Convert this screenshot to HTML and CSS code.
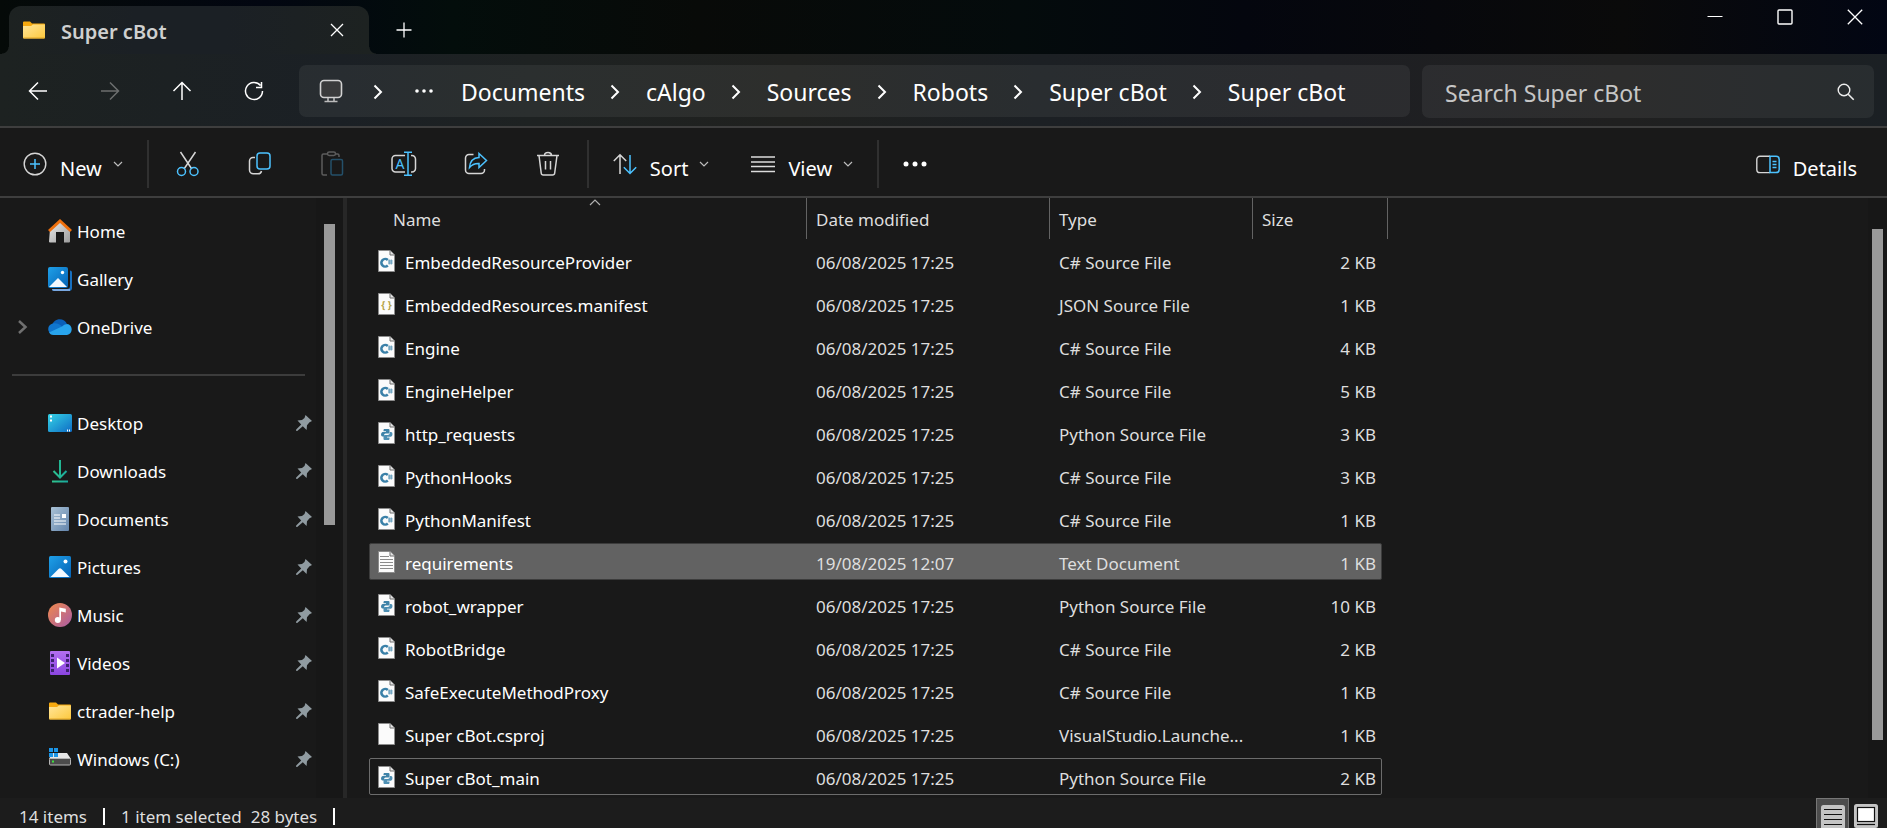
FILE: index.html
```html
<!DOCTYPE html>
<html lang="en">
<head>
	<meta charset="UTF-8">
	<meta name="viewport" content="width=device-width, initial-scale=1.0">
	<title>Super cBot</title>
	<link rel="stylesheet" href="styles.css">
</head>
<body>
	<!-- shared icons -->
	<svg class="defs" width="0" height="0" aria-hidden="true">
		<defs>
			<linearGradient id="g-folder" x1="0" y1="0" x2="1" y2="1"><stop offset="0" stop-color="#ffe59a"/><stop offset="1" stop-color="#fcc83c"/></linearGradient>
			<linearGradient id="g-blue" x1="0" y1="0" x2="1" y2="1"><stop offset="0" stop-color="#1fa0e8"/><stop offset="1" stop-color="#0562b5"/></linearGradient>
			<linearGradient id="g-desk" x1="0" y1="0" x2="1" y2="1"><stop offset="0" stop-color="#35d3e6"/><stop offset="1" stop-color="#0f6cc4"/></linearGradient>
			<linearGradient id="g-doc" x1="0" y1="0" x2="1" y2="1"><stop offset="0" stop-color="#a9c2d6"/><stop offset="1" stop-color="#6485ac"/></linearGradient>
			<linearGradient id="g-music" x1="0" y1="0" x2="1" y2="1"><stop offset="0" stop-color="#f08a4b"/><stop offset="1" stop-color="#a85ba6"/></linearGradient>
			<linearGradient id="g-video" x1="0" y1="0" x2="0" y2="1"><stop offset="0" stop-color="#b36ff0"/><stop offset="1" stop-color="#8a45e0"/></linearGradient>
			<linearGradient id="g-down" x1="0" y1="0" x2="1" y2="0"><stop offset="0" stop-color="#2fc48d"/><stop offset="1" stop-color="#18a89e"/></linearGradient>
			<linearGradient id="g-home" x1="0" y1="0" x2="1" y2="1"><stop offset="0" stop-color="#ececec"/><stop offset="1" stop-color="#9c9c9c"/></linearGradient>
		</defs>
		<symbol id="folder" viewBox="0 0 24 24">
			<path d="M1 4.500a1 1 0 0 1 1-1h6l2 2h12a1 1 0 0 1 1 1v6H1z" fill="#f6a90f"/>
			<path d="M1 8h8l2-1.500h12v13a1 1 0 0 1-1 1H2a1 1 0 0 1-1-1z" fill="url(#g-folder)"/>
			<path d="M1.500 20h21" stroke="#e0a526"/>
		</symbol>
		<symbol id="pin" viewBox="0 0 16 16">
			<path d="M9.500 0L16 6l-2.500 1.200-2.500 3-.4 4.800L6.800 11.200 1.200 16 0 15.800l.2-1.300 5-5L1.500 5.500l4.500-.5 2.500-2z" fill="#909ba1"/>
		</symbol>
		<symbol id="down" viewBox="0 0 10 6"><path d="M1 1l4 4 4-4" fill="none" stroke="#bdbdbd" stroke-width="1.200"/></symbol>
		<symbol id="next" viewBox="0 0 10 16"><path d="M1.500 1.500L8 8l-6.500 6.500" fill="none" stroke="#fff" stroke-width="2"/></symbol>
		<symbol id="page" viewBox="0 0 17 22">
			<path d="M.5.5H12l4.500 4.500v16.500H.5z" fill="#fbfbfb" stroke="#8c8c8c"/>
			<path d="M12 .5V5h4.500" fill="#e4e4e4" stroke="#6e6e6e"/>
		</symbol>
		<symbol id="cs" viewBox="0 0 17 22">
			<use href="#page"/>
			<path d="M9.800 10A3.800 3.800 0 1 0 9.800 15.500" fill="none" stroke="#3a80a8" stroke-width="2.600"/>
			<path d="M11.200 9.500v5M13.200 9.500v5M10.200 11h4.500M10.200 13h4.500" stroke="#5a97b8" stroke-width="1"/>
		</symbol>
		<symbol id="py" viewBox="0 0 17 22">
			<use href="#page"/>
			<path d="M6 7h4.500q1 0 1 1v2.500q0 1-1 1h-3q-1.500 0-1.500 2v1H4.500Q3 14.500 3 12.500T4.500 10H8V9.200H5.500V8z" fill="#3f83a8"/>
			<path d="M11 18H6.500q-1 0-1-1v-2.500q0-1.500 1.200-1.500h3q2 0 2-2v-1H13q1.500 0 1.500 2T13 14.800H9v.7h2.500V17z" fill="#4d8fb3"/>
		</symbol>
		<symbol id="txt" viewBox="0 0 17 22">
			<use href="#page"/>
			<path d="M2 5.500h9M2 8.500h13M2 11.500h13M2 14.500h13M2 17.500h13" stroke="#8a8a8a" stroke-width="1.200"/>
		</symbol>
	</svg>

	<header class="titlebar">
		<div class="tab">
			<svg class="icon24"><use href="#folder"/></svg>
			<span class="tab-title">Super cBot</span>
			<button type="button" class="plain tab-close" aria-label="Close tab"><svg width="14" height="14" viewBox="0 0 14 14"><path d="M1 1l12 12M13 1L1 13" stroke="#fff" stroke-width="1.300"/></svg></button>
		</div>
		<button type="button" class="plain tab-new" aria-label="New tab"><svg width="16" height="16" viewBox="0 0 16 16"><path d="M8 .5v15M.5 8h15" stroke="#fff" stroke-width="1.300"/></svg></button>
		<div class="window-buttons">
			<button type="button" class="plain" aria-label="Minimize"><svg width="16" height="16" viewBox="0 0 16 16"><path d="M.5 7.500h15" stroke="#fff"/></svg></button>
			<button type="button" class="plain" aria-label="Maximize"><svg width="16" height="16" viewBox="0 0 16 16"><rect x="1" y="1" width="14" height="14" rx="1" fill="none" stroke="#fff" stroke-width="1.400"/></svg></button>
			<button type="button" class="plain" aria-label="Close"><svg width="16" height="16" viewBox="0 0 16 16"><path d="M.8.8l14.400 14.400M15.200.8L.8 15.200" stroke="#fff" stroke-width="1.300"/></svg></button>
		</div>
	</header>

	<nav class="navbar">
		<div class="nav-buttons">
			<button type="button" class="plain" aria-label="Back"><svg width="20" height="20" viewBox="0 0 20 20"><path d="M19 10H1.500M10 1.500L1.500 10l8.500 8.500"/></svg></button>
			<button type="button" class="plain" aria-label="Forward" disabled><svg width="20" height="20" viewBox="0 0 20 20"><path d="M1 10h17.500M10 1.500l8.500 8.500-8.500 8.500"/></svg></button>
			<button type="button" class="plain" aria-label="Up"><svg width="20" height="20" viewBox="0 0 20 20"><path d="M10 19V1.500M1.500 10L10 1.500l8.500 8.500"/></svg></button>
			<button type="button" class="plain" aria-label="Refresh"><svg width="20" height="20" viewBox="0 0 20 20"><path d="M16.500 4.500A8.500 8.500 0 1 0 18.500 10M17.500 1v5.500H12"/></svg></button>
		</div>
		<div class="address">
			<svg width="24" height="24" viewBox="0 0 24 24"><rect x="1.500" y="1.500" width="21" height="17" rx="3.500" fill="#3a3b3c" stroke="#d2d2d2" stroke-width="1.600"/><path d="M9 19v3M15 19v3M5.500 22.500h13" stroke="#bbb" stroke-width="1.600"/></svg>
			<svg class="next next-root"><use href="#next"/></svg>
			<button type="button" class="plain dots" aria-label="More folders"><svg width="18" height="4" viewBox="0 0 18 4"><circle cx="2" cy="2" r="1.800"/><circle cx="9" cy="2" r="1.800"/><circle cx="16" cy="2" r="1.800"/></svg></button>
			<a href="#">Documents</a>
			<svg class="next"><use href="#next"/></svg>
			<a href="#">cAlgo</a>
			<svg class="next"><use href="#next"/></svg>
			<a href="#">Sources</a>
			<svg class="next"><use href="#next"/></svg>
			<a href="#">Robots</a>
			<svg class="next"><use href="#next"/></svg>
			<a href="#">Super cBot</a>
			<svg class="next"><use href="#next"/></svg>
			<a href="#">Super cBot</a>
		</div>
		<div class="search">
			<input type="text" placeholder="Search Super cBot" aria-label="Search Super cBot">
			<svg width="18" height="18" viewBox="0 0 18 18"><circle cx="7" cy="7" r="5.800" fill="none" stroke="#eee" stroke-width="1.400"/><path d="M11.200 11.200l5.500 5.500" stroke="#eee" stroke-width="1.600"/></svg>
		</div>
	</nav>

	<div class="toolbar">
		<button type="button" class="plain tool-text">
			<svg width="24" height="24" viewBox="0 0 24 24"><circle cx="12" cy="12" r="10.800" fill="none" stroke="#d6d6d6" stroke-width="1.400"/><path d="M12 7v10M7 12h10" stroke="#4cc2ff" stroke-width="1.500"/></svg>
			<span>New</span>
			<svg class="down"><use href="#down"/></svg>
		</button>
		<i class="sep"></i>
		<div class="tool-icons">
			<button type="button" class="plain" aria-label="Cut"><svg width="24" height="26" viewBox="0 0 24 26"><path d="M4.500 1l11.300 17M19.500 1L8 18" stroke="#d6d6d6"/><circle cx="5.500" cy="20.500" r="4" stroke="#4cc2ff"/><circle cx="18" cy="20.500" r="4" stroke="#4cc2ff"/></svg></button>
			<button type="button" class="plain" aria-label="Copy"><svg width="24" height="26" viewBox="0 0 24 26"><path d="M7 6.500H5a3.500 3.500 0 0 0-3.500 3.500v9A3.800 3.800 0 0 0 5.300 22.800H10a3.500 3.500 0 0 0 3.500-2.800" stroke="#d6d6d6"/><rect x="9" y="2" width="13" height="16" rx="3" stroke="#4cc2ff"/></svg></button>
			<button type="button" class="plain" aria-label="Paste" disabled><svg width="24" height="26" viewBox="0 0 24 26"><path d="M8 3H3.500A1.500 1.500 0 0 0 2 4.500v18A1.500 1.500 0 0 0 3.500 24H7M15 3h2.500Q19 3 19 4.500V6" stroke="#5c5c5c"/><rect x="7.500" y="1" width="8" height="3.500" rx="1.700" stroke="#5c5c5c"/><rect x="11" y="8.500" width="11.500" height="15.500" rx="1.500" stroke="#24506a"/></svg></button>
			<button type="button" class="plain" aria-label="Rename"><svg width="26" height="26" viewBox="0 0 26 26"><path d="M14 4.500H4.500A3.500 3.500 0 0 0 1 8v9.500A3.500 3.500 0 0 0 4.500 21H14M20 4.500h1A3.500 3.500 0 0 1 24.500 8v9.500A3.500 3.500 0 0 1 21 21h-1" stroke="#d6d6d6"/><path d="M17 1.500v22.500M13 1.300h8M13 24.300h8" stroke="#4cc2ff"/><text x="9" y="17.500" text-anchor="middle" font-size="14" fill="#4cc2ff">A</text></svg></button>
			<button type="button" class="plain" aria-label="Share"><svg width="24" height="26" viewBox="0 0 24 26"><path d="M9.500 3.500H5A3.500 3.500 0 0 0 1.500 7v12A3.500 3.500 0 0 0 5 22.500h12A3.500 3.500 0 0 0 20.500 19v-1" stroke="#d6d6d6"/><path d="M15 2.500l7.500 7-7.500 7v-4C10.500 12.300 8 13.500 5.500 16.500 6 10 9.500 6.800 15 6.500z" stroke="#4cc2ff"/></svg></button>
			<button type="button" class="plain" aria-label="Delete"><svg width="24" height="26" viewBox="0 0 24 26"><path d="M1 4.500h22M3 4.500l2.200 17.500A2.200 2.200 0 0 0 7.500 24h9a2.200 2.200 0 0 0 2.200-2L21 4.500M8.500 4.500a3.500 3 0 0 1 7 0M9.500 10v8.500M14.500 10v8.500" stroke="#d6d6d6"/></svg></button>
		</div>
		<i class="sep"></i>
		<button type="button" class="plain tool-text">
			<svg width="24" height="24" viewBox="0 0 24 24"><path d="M7 22V3M.8 9L7 2.800 13.200 9" fill="none" stroke="#d6d6d6" stroke-width="1.500"/><path d="M17 3v18.500M10.800 15.300l6.200 6.200 6.200-6.200" fill="none" stroke="#4cc2ff" stroke-width="1.500"/></svg>
			<span>Sort</span>
			<svg class="down"><use href="#down"/></svg>
		</button>
		<button type="button" class="plain tool-text tool-view">
			<svg width="24" height="24" viewBox="0 0 24 24"><path d="M0 5h24M0 10h24M0 14.500h24M0 19.500h24" stroke="#dcdcdc" stroke-width="1.500"/></svg>
			<span>View</span>
			<svg class="down"><use href="#down"/></svg>
		</button>
		<i class="sep"></i>
		<button type="button" class="plain tool-text" aria-label="See more"><svg width="24" height="6" viewBox="0 0 24 6"><circle cx="3" cy="3" r="2.500" fill="#fff"/><circle cx="12" cy="3" r="2.500" fill="#fff"/><circle cx="21" cy="3" r="2.500" fill="#fff"/></svg></button>
		<button type="button" class="plain tool-text tool-details">
			<svg width="24" height="24" viewBox="0 0 24 24"><path d="M14 4.200H4A3.200 3.200 0 0 0 .8 7.400v10A3.200 3.200 0 0 0 4 20.600h10" fill="none" stroke="#d6d6d6" stroke-width="1.400"/><path d="M14 4.200h6a3.200 3.200 0 0 1 3.200 3.200v10a3.200 3.200 0 0 1-3.200 3.200h-6zM16.500 9.500h4M16.500 12.500h4M16.500 15.500h4" fill="none" stroke="#4cc2ff" stroke-width="1.500"/></svg>
			<span>Details</span>
		</button>
	</div>

	<main class="main">
		<aside class="sidebar">
			<ul class="places">
				<li><a href="#"><svg class="icon24" viewBox="0 0 24 24"><path d="M2 10l10-8 10 8v12.500a1 1 0 0 1-1 1h-5V13H8v10.500H2a1 1 0 0 1-1-1z" fill="url(#g-home)"/><path d="M1 12L12 2l11 10" fill="none" stroke="#ee6f0c" stroke-width="3"/></svg>Home</a></li>
				<li><a href="#"><svg class="icon24" viewBox="0 0 24 24"><path d="M22 3.500q2 0 2 2V21q0 3-3 3H6q-2 0-2-2h15q3 0 3-3z" fill="#1870c0"/><path d="M4 22h18v2H6q-2 0-2-2z" fill="#79a7e0"/><rect width="20" height="21" rx="2" fill="url(#g-blue)"/><path d="M1 20l9-9 9 9z" fill="#f2f8ff"/><circle cx="14.500" cy="5.500" r="1.700" fill="#fff"/></svg>Gallery</a></li>
				<li><svg class="expand" width="10" height="14" viewBox="0 0 10 14"><path d="M1 1l6.500 6L1 13" fill="none" stroke="#707070" stroke-width="2.500"/></svg><a href="#"><svg class="icon24" viewBox="0 0 24 24"><path d="M4 11C5 2.500 16.500 2 19 9l-6 6z" fill="#0a5fb8"/><path d="M5 8.500c3-.5 6 0 9 3L6 19.500C-1.500 19-1.500 9.500 5 8.500z" fill="#1076cf"/><path d="M19 9c6 .5 6.500 10 0 11H5.500q-3 0-4.500-2.500L14 11.500Q16 9 19 9z" fill="#28a4ec"/></svg>OneDrive</a></li>
				<li class="rule"></li>
				<li><a href="#"><svg class="icon24" viewBox="0 0 24 24"><rect y="3" width="24" height="18" rx="1.500" fill="url(#g-desk)"/><path d="M2 5.500h2M2 9.500h2M19 19.500h1M21 19.500h1" stroke="#fff" stroke-width="2"/></svg>Desktop</a><svg class="pin"><use href="#pin"/></svg></li>
				<li><a href="#"><svg class="icon24" viewBox="0 0 24 24"><path d="M11 1h2v18h-2z" fill="#22b592"/><path d="M5.500 12l6.500 6.500 6.500-6.500M4 22.500h16" fill="none" stroke="url(#g-down)" stroke-width="2"/></svg>Downloads</a><svg class="pin"><use href="#pin"/></svg></li>
				<li><a href="#"><svg class="icon24" viewBox="0 0 24 24"><rect x="3" width="18" height="24" rx="1" fill="url(#g-doc)"/><path d="M6 8h6M6 11h6M6 14h12M6 17h12" stroke="#fff"/><path d="M14 7h4v4h-4z" fill="#fff"/></svg>Documents</a><svg class="pin"><use href="#pin"/></svg></li>
				<li><a href="#"><svg class="icon24" viewBox="0 0 24 24"><rect x="1" y="1" width="22" height="22" rx="1.500" fill="url(#g-blue)"/><path d="M2.500 22l8-8q1.500-1.500 3 0l8 8z" fill="#f4f9ff"/><circle cx="17.500" cy="6.500" r="2" fill="#fff"/></svg>Pictures</a><svg class="pin"><use href="#pin"/></svg></li>
				<li><a href="#"><svg class="icon24" viewBox="0 0 24 24"><circle cx="12" cy="12" r="12" fill="url(#g-music)"/><circle cx="9.800" cy="17" r="3" fill="#fff"/><path d="M11.300 17V4.500l6.500 1.200V9.500L13 8.600V17z" fill="#fff"/></svg>Music</a><svg class="pin"><use href="#pin"/></svg></li>
				<li><a href="#"><svg class="icon24" viewBox="0 0 24 24"><rect x="2" width="20" height="24" rx="1" fill="url(#g-video)"/><path d="M4.500 3v20M19.500 3v20" stroke="#3d2270" stroke-width="3" stroke-dasharray="3 2"/><path d="M9 6.500l8 5.500-8 5.500z" fill="#fff"/></svg>Videos</a><svg class="pin"><use href="#pin"/></svg></li>
				<li><a href="#"><svg class="icon24"><use href="#folder"/></svg>ctrader-help</a><svg class="pin"><use href="#pin"/></svg></li>
				<li><a href="#"><svg class="icon24" viewBox="0 0 24 24"><path d="M4 6h15l4 6H1z" fill="#e6e6e6"/><rect x="1.500" y="11.500" width="21" height="6.500" rx="1" fill="#4c4c4c" stroke="#b5b5b5"/><path d="M4 14.500h2" stroke="#3fe03f" stroke-width="2"/><path d="M1 1h4v4H1zM6 1h4v4H6zM1 6h4v4H1zM6 6h4v4H6z" fill="#1c95e6"/></svg>Windows (C:)</a><svg class="pin"><use href="#pin"/></svg></li>
			</ul>
			<div class="track track-side"><div class="thumb"></div></div>
		</aside>

		<section class="content">
			<table class="files">
				<thead>
					<tr>
						<th>Name<svg class="sorted" width="12" height="7" viewBox="0 0 12 7"><path d="M1 6l5-5 5 5" fill="none" stroke="#b0b0b0" stroke-width="1.200"/></svg></th>
						<th>Date modified</th>
						<th>Type</th>
						<th>Size</th>
					</tr>
				</thead>
				<tbody>
					<tr><td><svg class="file"><use href="#cs"/></svg>EmbeddedResourceProvider</td><td>06/08/2025 17:25</td><td>C# Source File</td><td>2 KB</td></tr>
					<tr><td><svg class="file" viewBox="0 0 17 22"><use href="#page"/><text x="8.500" y="15.500" text-anchor="middle" font-size="10" font-weight="bold" fill="#b5a345">{ }</text></svg>EmbeddedResources.manifest</td><td>06/08/2025 17:25</td><td>JSON Source File</td><td>1 KB</td></tr>
					<tr><td><svg class="file"><use href="#cs"/></svg>Engine</td><td>06/08/2025 17:25</td><td>C# Source File</td><td>4 KB</td></tr>
					<tr><td><svg class="file"><use href="#cs"/></svg>EngineHelper</td><td>06/08/2025 17:25</td><td>C# Source File</td><td>5 KB</td></tr>
					<tr><td><svg class="file"><use href="#py"/></svg>http_requests</td><td>06/08/2025 17:25</td><td>Python Source File</td><td>3 KB</td></tr>
					<tr><td><svg class="file"><use href="#cs"/></svg>PythonHooks</td><td>06/08/2025 17:25</td><td>C# Source File</td><td>3 KB</td></tr>
					<tr><td><svg class="file"><use href="#cs"/></svg>PythonManifest</td><td>06/08/2025 17:25</td><td>C# Source File</td><td>1 KB</td></tr>
					<tr class="selected"><td><svg class="file"><use href="#txt"/></svg>requirements</td><td>19/08/2025 12:07</td><td>Text Document</td><td>1 KB</td></tr>
					<tr><td><svg class="file"><use href="#py"/></svg>robot_wrapper</td><td>06/08/2025 17:25</td><td>Python Source File</td><td>10 KB</td></tr>
					<tr><td><svg class="file"><use href="#cs"/></svg>RobotBridge</td><td>06/08/2025 17:25</td><td>C# Source File</td><td>2 KB</td></tr>
					<tr><td><svg class="file"><use href="#cs"/></svg>SafeExecuteMethodProxy</td><td>06/08/2025 17:25</td><td>C# Source File</td><td>1 KB</td></tr>
					<tr><td><svg class="file"><use href="#page"/></svg>Super cBot.csproj</td><td>06/08/2025 17:25</td><td>VisualStudio.Launche...</td><td>1 KB</td></tr>
					<tr class="focused"><td><svg class="file"><use href="#py"/></svg>Super cBot_main</td><td>06/08/2025 17:25</td><td>Python Source File</td><td>2 KB</td></tr>
				</tbody>
			</table>
			<div class="track track-main"><div class="thumb"></div></div>
		</section>
	</main>

	<footer class="status">
		<span class="count">14 items</span>
		<span class="picked">1 item selected</span>
		<span class="count">28 bytes</span>
		<div class="view-switch">
			<button type="button" class="plain active" aria-label="Details view"><svg width="24" height="24" viewBox="0 0 24 24"><rect width="24" height="26" rx="2.500" fill="#c4c4c4"/><path d="M3 4.500h18M3 9.500h18M3 14.500h18M3 19.500h18" stroke="#111" stroke-width="1.200"/></svg></button>
			<button type="button" class="plain" aria-label="Large icons view"><svg width="24" height="24" viewBox="0 0 24 24"><rect width="24" height="24" rx="2.500" fill="#c4c4c4"/><rect x="3.500" y="3.500" width="17" height="14" fill="#fff" stroke="#111" stroke-width="1.200"/><path d="M3 20.500h18" stroke="#111" stroke-width="1.200"/></svg></button>
		</div>
	</footer>
</body>
</html>
```

FILE: styles.css
```css
* {
	box-sizing: border-box;
}
body {
	margin: 0;
	height: 100vh;
	display: flex;
	flex-direction: column;
	overflow: hidden;
	background: #191919;
	color: #fff;
	font-family: "Segoe UI", "Noto Sans", sans-serif;
	font-size: 17px;
}
.defs {
	position: absolute;
}
svg {
	display: block;
	flex: none;
}
a {
	color: inherit;
	text-decoration: none;
}
.plain {
	display: flex;
	align-items: center;
	justify-content: center;
	padding: 0;
	border: 0;
	background: none;
	color: inherit;
	font: inherit;
}
.icon24 {
	width: 24px;
	height: 24px;
}

/* title bar */
.titlebar {
	flex: none;
	display: flex;
	align-items: flex-start;
	height: 54px;
	padding-left: 9px;
	background: linear-gradient(90deg, #050a08 0%, #020611 14%, #030d0b 24%, #080a08 37%, #040b0c 54%, #04060e 66%, #0a0a0a 86%, #020613 100%);
}
.tab {
	position: relative;
	display: flex;
	align-items: center;
	width: 360px;
	height: 48px;
	margin-top: 6px;
	padding: 0 18px 0 13px;
	border-radius: 12px 12px 0 0;
	background: linear-gradient(90deg, #1d2221, #1b2025 35%, #1b2025 60%, #1d2221);
}
/* curved feet of the tab */
.tab::before,
.tab::after {
	content: '';
	position: absolute;
	bottom: 0;
	width: 7px; height: 7px;
}
.tab::before {
	left: -7px;
	background: radial-gradient(circle at 0 0, transparent 6px, #1d2221 7px);
}
.tab::after {
	right: -7px;
	background: radial-gradient(circle at 100% 0, transparent 6px, #1d2221 7px);
}
.tab-title {
	flex: 1;
	margin-left: 15px;
	padding-top: 3px;
	color: #cfd0d0;
	font-size: 20px;
	font-weight: 600;
}
.tab-close {
	width: 28px;
	height: 32px;
}
.tab-new {
	width: 48px;
	height: 48px;
	margin: 6px 0 0 11px;
}
.window-buttons {
	display: flex;
	gap: 6px;
	margin-left: auto;
}
.window-buttons button {
	width: 64px;
	height: 33px;
}

/* navigation bar */
.navbar {
	flex: none;
	display: flex;
	align-items: flex-start;
	height: 74px;
	padding: 11px 13px 0 2px;
	border-bottom: 2px solid #3e3e3e;
	background: linear-gradient(90deg, #1d2221 0%, #1b2025 18%, #1e2222 28%, #20211f 42%, #1c2024 55%, #1e1f23 70%, #202020 86%, #1b2024 100%);
}
.nav-buttons {
	display: flex;
	margin-right: 9px;
}
.nav-buttons button {
	width: 72px;
	height: 52px;
}
.nav-buttons path {
	fill: none;
	stroke: #fff;
	stroke-width: 1.5;
}
.nav-buttons button:disabled path {
	stroke: #6c6e6e;
}
.address {
	flex: 1;
	display: flex;
	align-items: center;
	height: 52px;
	padding-left: 20px;
	border-radius: 7px;
	background: rgba(255, 255, 255, .06);
	font-size: 23px;
}
.address a {
	padding-top: 2px;
}
.next {
	width: 10px;
	height: 16px;
	margin: 2px 26px 0 25px;
}
.next-root {
	margin: 2px 32px 0 30px;
}
.dots {
	margin-right: 28px;
}
.dots circle {
	fill: #fff;
}
.search {
	display: flex;
	align-items: center;
	width: 452px;
	height: 53px;
	margin-left: 12px;
	padding: 0 19px 0 23px;
	border-radius: 7px;
	background: rgba(255, 255, 255, .06);
}
.search input {
	flex: 1;
	min-width: 0;
	padding: 2px 0 0;
	border: 0;
	outline: 0;
	background: none;
	color: #fff;
	font: inherit;
	font-size: 23px;
}
.search input::placeholder {
	color: #c6c6c6;
}

/* command bar */
.toolbar {
	flex: none;
	display: flex;
	align-items: center;
	height: 70px;
	padding: 4px 30px 0 23px;
	border-bottom: 2px solid #3e3e3e;
}
.sep {
	width: 2px;
	height: 48px;
	background: #303030;
}
.tool-text {
	font-size: 20px;
}
.tool-text span {
	margin: 8px 11px 0 13px;
}
.toolbar .sep {
	margin: 0 24px;
}
.tool-icons {
	display: flex;
	margin: 0 -21px;
}
.tool-icons button {
	width: 72px;
	height: 48px;
}
.tool-icons svg {
	fill: none;
	stroke-width: 1.5;
}
.down {
	width: 10px;
	height: 6px;
}
.tool-view {
	margin-left: 42px;
}
.tool-details {
	margin-left: auto;
}
.tool-details span {
	margin-right: 0;
}

/* main area */
.main {
	flex: 1;
	display: flex;
	min-height: 0;
}
.sidebar {
	display: flex;
	width: 347px;
	border-right: 4px solid #272727;
}
.places {
	flex: 1;
	margin: 0;
	padding: 9px 0 0 12px;
	list-style: none;
}
.places li {
	position: relative;
	display: flex;
	align-items: center;
	height: 48px;
	padding-left: 36px;
}
.places a {
	flex: 1;
	display: flex;
	align-items: center;
	gap: 5px;
}
.places .expand {
	position: absolute;
	left: 6px;
}
.places .rule {
	padding: 0;
}
.rule::before {
	content: '';
	width: 293px;
	border-top: 2px solid #3c3c3c;
}
.pin {
	width: 16px;
	height: 16px;
	margin-right: 4px;
}
.track {
	background: #171717;
}
.track-side {
	width: 27px;
	padding: 26px 8px 0;
}
.track-side .thumb {
	height: 301px;
}
.track-main {
	width: 19px;
	padding: 31px 4px 0;
}
.track-main .thumb {
	height: 511px;
}
.thumb {
	background: #999;
}
.content {
	flex: 1;
	display: flex;
	justify-content: space-between;
	padding-left: 22px;
}

/* file list */
.files,
.files thead,
.files tbody {
	display: block;
}
.files tr {
	display: grid;
	grid-template-columns: 438px 243px 203px 135px;
}
.files th {
	position: relative;
	height: 41px;
	padding: 10px 0 0 9px;
	border-right: 1px solid #636363;
	color: #dedede;
	font-weight: normal;
	line-height: 24px;
	text-align: left;
}
.files th:first-child {
	padding-left: 24px;
}
.sorted {
	position: absolute;
	top: 1px;
	left: 220px;
}
.files tbody {
	padding: 3px 6px 0 0;
}
.files tbody tr {
	grid-template-columns: 437px 243px 203px 1fr;
	height: 37px;
	margin-bottom: 6px;
	border: 1px solid transparent;
	border-radius: 2px;
}
.files td {
	display: flex;
	align-items: center;
	padding: 3px 0 0 9px;
	color: #dedede;
}
.files td:first-child {
	gap: 10px;
	padding-left: 8px;
	color: #fff;
}
.files td:last-child {
	justify-content: flex-end;
	padding-right: 5px;
}
.file {
	width: 17px;
	height: 22px;
	margin-top: -3px;
}
.files .selected {
	border-color: #3c3c3c;
	background: #626262;
}
.files .focused {
	border-color: #6c6c6c;
}

/* status bar */
.status {
	flex: none;
	display: flex;
	align-items: center;
	height: 30px;
	padding: 0 9px 0 19px;
	background: #1c1c1c;
	color: #dedede;
}
.status > span {
	margin-top: 6px;
	line-height: 17px;
}
.status .count {
	padding-right: 16px;
	border-right: 2px solid #fff;
}
.status .picked {
	margin: 6px 9px 0 16px;
}
.view-switch {
	display: flex;
	align-items: flex-start;
	gap: 5px;
	height: 30px;
	margin-left: auto;
}
.view-switch button {
	padding-top: 6px;
	height: 30px;
}
.view-switch .active {
	width: 33px;
	border: 1px solid #777;
	border-bottom: 0;
	background: #4d4d4d;
}
```
